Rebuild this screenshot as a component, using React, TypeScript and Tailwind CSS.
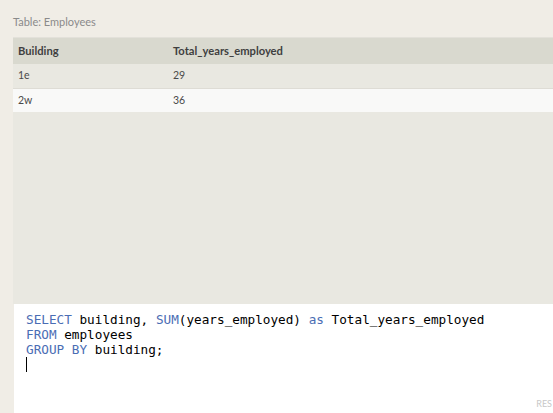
import React from "react"

const rows = [
  { building: "1e", total: "29" },
  { building: "2w", total: "36" },
]

const kw = "text-[#4a6db4]"

export default function App() {
  return (
    <div className="w-[553px] h-[413px] overflow-hidden bg-[#f0ede6] flex flex-col" style={{ fontFamily: "Lato, 'Open Sans', sans-serif" }}>
      <div className="h-[37px] pl-[13px] pt-[15px] text-[11px] leading-[14px] text-[#8a8a8a]">Table: Employees</div>
      <div className="ml-[13px] flex-1 flex flex-col border-t border-[#e3e1da]">
        <div className="flex-1 bg-[#e9e8e1] flex flex-col">
          <div className="flex h-[26px] items-center bg-[#d9d9cf] text-[11.2px] font-bold text-[#3f3f3f]">
            <div className="w-[160px] pl-[5px]">Building</div>
            <div>Total_years_employed</div>
          </div>
          {rows.map((r, i) => (
            <div
              key={r.building}
              className={
                i % 2 === 0
                  ? "flex h-[25px] items-center bg-[#e9e8e1] border-b border-[#dedcd5] text-[10.5px] text-[#4a4a4a]"
                  : "flex h-[23px] items-center bg-[#f9f9f8] text-[10.5px] text-[#4a4a4a]"
              }
            >
              <div className="w-[160px] pl-[5px]">{r.building}</div>
              <div>{r.total}</div>
            </div>
          ))}
        </div>
        <div className="relative h-[109px] bg-white ml-[1px] pt-[8px] pl-[12px] text-[12.7px] leading-[15px] text-black" style={{ fontFamily: "'DejaVu Sans Mono', monospace" }}>
          <div className="whitespace-pre">
            <span className={kw}>SELECT</span> building, <span className={kw}>SUM</span>(years_employed) <span className={kw}>as</span> Total_years_employed
          </div>
          <div className="whitespace-pre">
            <span className={kw}>FROM</span> employees
          </div>
          <div className="whitespace-pre">
            <span className={kw}>GROUP BY</span> building;
          </div>
          <div className="h-[15px] w-px bg-black" />
          <div className="absolute right-[1px] bottom-[2px] text-[9px] text-[#c8c8c8]" style={{ fontFamily: "Lato, sans-serif" }}>RES</div>
        </div>
      </div>
    </div>
  )
}
